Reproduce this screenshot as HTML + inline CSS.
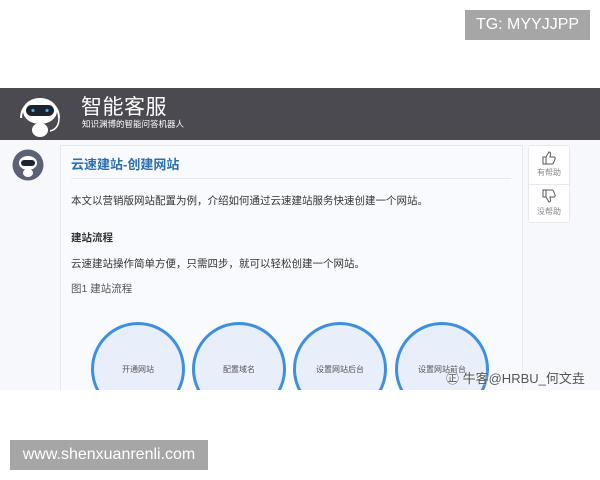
<!DOCTYPE html>
<html><head><meta charset="utf-8"><style>
*{margin:0;padding:0;box-sizing:border-box}
body{width:600px;height:480px;background:#fff;position:relative;overflow:hidden;font-family:"Liberation Sans","Noto Sans CJK SC",sans-serif}
.abs{position:absolute}
.tag{background:#a6a6a6;color:#fff;font-size:16px;display:flex;align-items:center;justify-content:center}
.hdr{left:0;top:88px;width:600px;height:52px;background:#4b4a50}
.main{left:0;top:140px;width:600px;height:250px;background:#f7f8fb;overflow:hidden}
.card{left:60px;top:5px;width:463px;height:260px;background:#f9fafe;border:1px solid #e6e8ee}
.t{color:#333;font-size:10.5px;left:10px;white-space:nowrap}
.circ{width:94px;height:94px;border-radius:50%;border:3px solid #3f8fe0;background:#e9effa;top:176px;display:flex;align-items:center;justify-content:center;font-size:8px;color:#555}
.side{left:528px;top:5px;width:42px;height:78px;background:#fff;border:1px solid #e6e8ee;border-radius:3px}
</style></head><body>
<div class="abs tag" style="left:465px;top:10px;width:125px;height:30px">TG: MYYJJPP</div>
<div class="abs hdr">
 <svg class="abs" style="left:12px;top:0px" width="56" height="52" viewBox="0 0 56 52">
  <path d="M9 30 A19 19 0 0 1 47 30" fill="none" stroke="#fff" stroke-width="2"/>
  <ellipse cx="28" cy="23" rx="17" ry="13" fill="#fff"/>
  <rect x="14" y="17" width="28" height="11" rx="5.5" fill="#1c2330"/>
  <circle cx="21" cy="22.5" r="1.6" fill="#4ad"/><circle cx="35" cy="22.5" r="1.6" fill="#4ad"/>
  <ellipse cx="28" cy="42" rx="8" ry="7" fill="#fff"/>
  <path d="M47 30 Q47 41 38 43" fill="none" stroke="#fff" stroke-width="1.5"/>
 </svg>
 <div class="abs" style="left:81px;top:3px;color:#fff;font-size:21px;letter-spacing:0.5px">智能客服</div>
 <div class="abs" style="left:82px;top:30px;color:#fff;font-size:8.5px">知识渊博的智能问答机器人</div>
</div>
<div class="abs main">
 <svg class="abs" style="left:12px;top:9px" width="32" height="32" viewBox="0 0 32 32">
  <circle cx="16" cy="16" r="15.5" fill="#5b6275"/>
  <ellipse cx="16" cy="14" rx="9" ry="7" fill="#fff"/>
  <rect x="9" y="11" width="14" height="6" rx="3" fill="#1c2330"/>
  <ellipse cx="16" cy="24" rx="5" ry="4" fill="#fff"/>
 </svg>
 <div class="abs card">
  <div class="abs" style="left:10px;top:8px;color:#2b6fb0;font-size:13px;font-weight:bold">云速建站-创建网站</div>
  <div class="abs" style="left:10px;top:32px;width:440px;height:1px;background:#e6e8ee"></div>
  <div class="abs t" style="top:47px">本文以营销版网站配置为例，介绍如何通过云速建站服务快速创建一个网站。</div>
  <div class="abs t" style="top:84px;font-weight:bold">建站流程</div>
  <div class="abs t" style="top:110px">云速建站操作简单方便，只需四步，就可以轻松创建一个网站。</div>
  <div class="abs t" style="top:135px;color:#555">图1 建站流程</div>
  <div class="abs circ" style="left:30px">开通网站</div>
  <div class="abs circ" style="left:131px">配置域名</div>
  <div class="abs circ" style="left:232px">设置网站后台</div>
  <div class="abs circ" style="left:334px">设置网站前台</div>
 </div>
 <div class="abs side">
  <svg class="abs" style="left:13px;top:5px" width="14" height="14" viewBox="0 0 14 14"><path d="M1 6h3v7H1zM4 6l3-5c1 0 2 1 1.5 2.5L8 6h4c1 0 1.5 1 1 2l-1.5 4c-.3.7-.8 1-1.5 1H4" fill="none" stroke="#555" stroke-width="1"/></svg>
  <div class="abs" style="left:0;top:21px;width:40px;text-align:center;font-size:8px;color:#888">有帮助</div>
  <div class="abs" style="left:0;top:38px;width:40px;height:1px;background:#e6e8ee"></div>
  <svg class="abs" style="left:13px;top:43px" width="14" height="14" viewBox="0 0 14 14"><path d="M1 1h3v7H1zM4 8l3 5c1 0 2-1 1.5-2.5L8 8h4c1 0 1.5-1 1-2L11.5 2c-.3-.7-.8-1-1.5-1H4" fill="none" stroke="#555" stroke-width="1"/></svg>
  <div class="abs" style="left:0;top:60px;width:40px;text-align:center;font-size:8px;color:#888">没帮助</div>
 </div>
 <div class="abs" style="left:446px;top:228px;color:#555;font-size:13px;text-shadow:0 0 2px #fff">㊣ 牛客@HRBU_何文垚</div>
</div>
<div class="abs tag" style="left:10px;top:440px;width:198px;height:30px">www.shenxuanrenli.com</div>
</body></html>
